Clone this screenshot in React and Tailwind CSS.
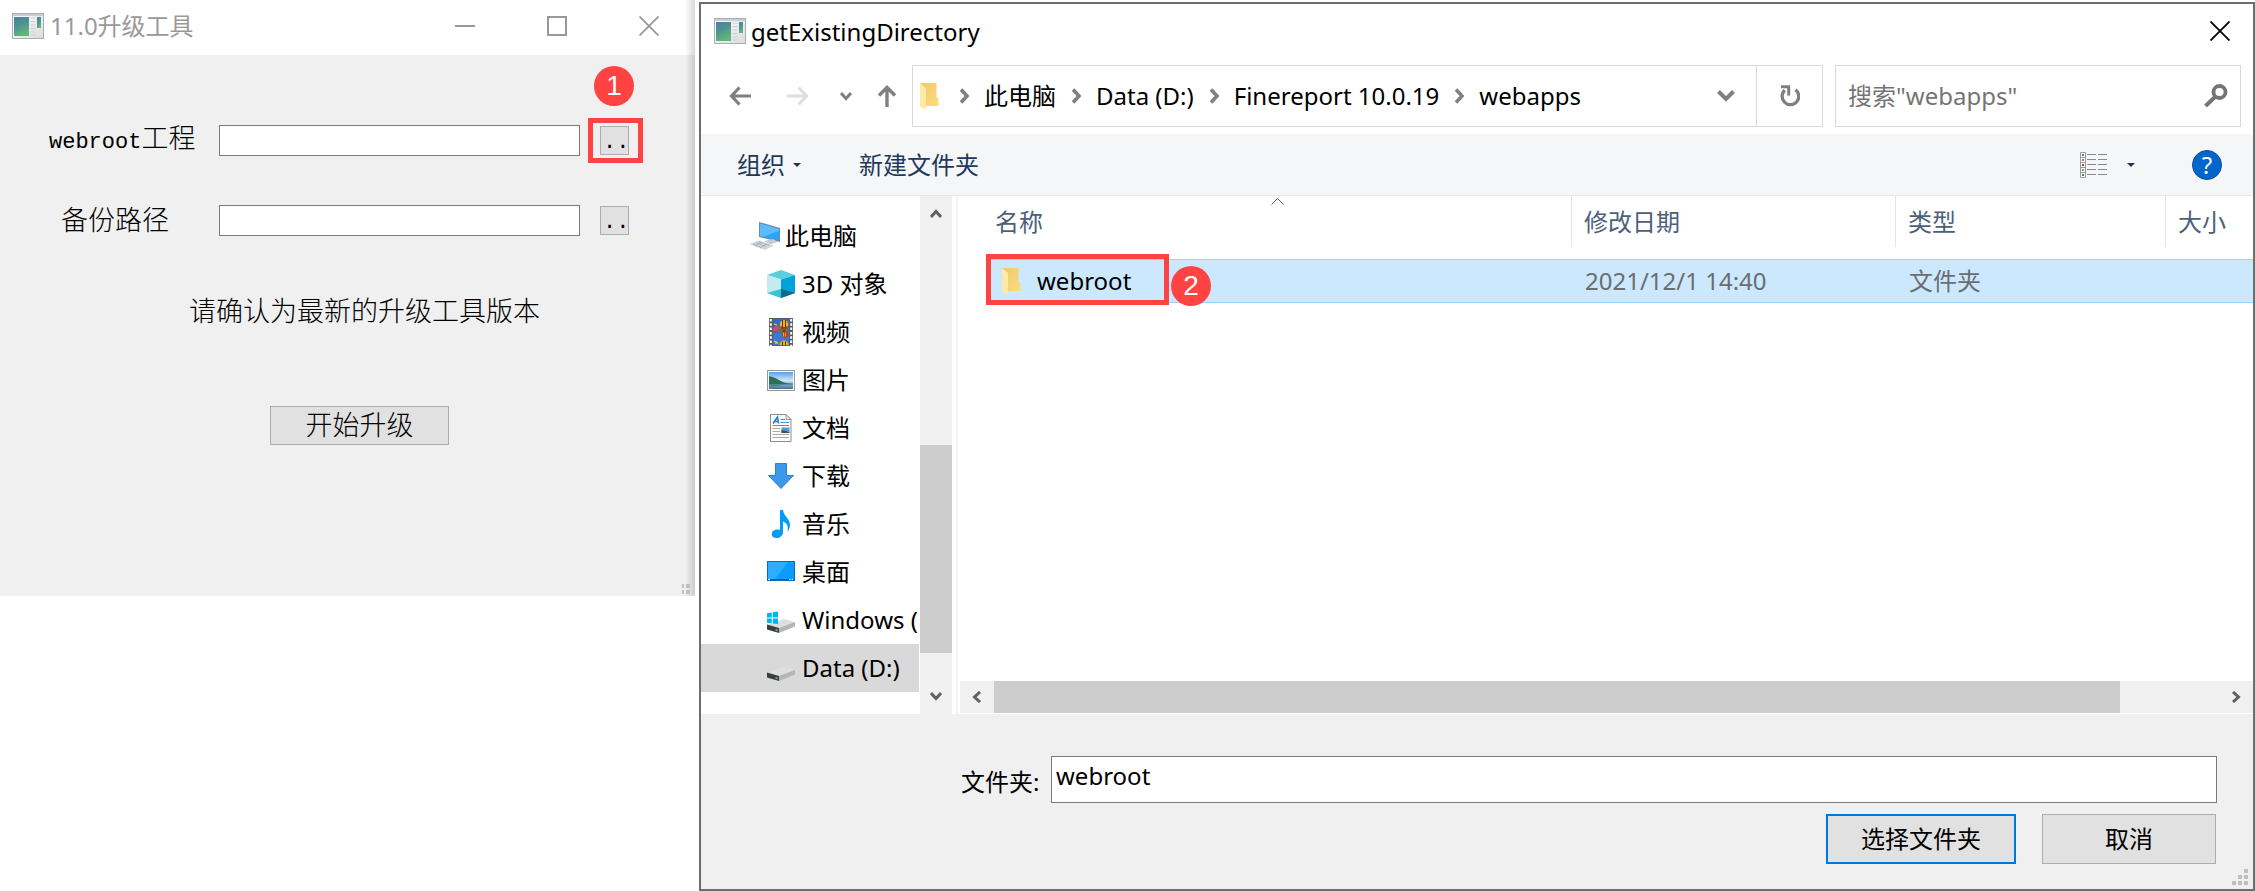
import React from "react";

const uiFont = "font-['Noto_Sans','Noto_Sans_CJK_SC',sans-serif]";
const formFont = "font-['Liberation_Serif','Noto_Sans_CJK_SC',serif]";

function AppIcon({ className }) {
  return (
    <svg className={className} viewBox="0 0 32 26" preserveAspectRatio="none" aria-hidden="true">
      <defs>
        <linearGradient id="appPane" x1="0" y1="0" x2="0.4" y2="1">
          <stop offset="0" stopColor="#4a7fa8" />
          <stop offset="0.5" stopColor="#4d9490" />
          <stop offset="1" stopColor="#62b678" />
        </linearGradient>
        <linearGradient id="appFrame" x1="0" y1="0" x2="1" y2="1">
          <stop offset="0" stopColor="#ffffff" />
          <stop offset="1" stopColor="#dcdcdc" />
        </linearGradient>
      </defs>
      <rect x="0.5" y="0.5" width="31" height="25" fill="url(#appFrame)" stroke="#a9adb5" />
      <rect x="1" y="1" width="30" height="2" fill="#c9cdd6" />
      <rect x="2" y="4" width="15" height="19" fill="url(#appPane)" />
      <path d="M18.500 5h5M18.500 8.500h5M18.500 12h5M18.500 15.500h5M18.500 19h5M18.500 22h5" stroke="#cfcfcf" />
      <rect x="25" y="4" width="4" height="11" fill="url(#appPane)" />
    </svg>
  );
}

function CloseGlyph({ className }) {
  return (
    <svg className={className} viewBox="0 0 20 20" fill="none" stroke="currentColor" strokeWidth="1.8" aria-hidden="true">
      <path d="M0.500 0.500L19.500 19.500M19.500 0.500L0.500 19.500" />
    </svg>
  );
}

function FolderIcon({ className }) {
  return (
    <svg className={className} viewBox="0 0 19 27" aria-hidden="true">
      <defs>
        <linearGradient id="folderBack" x1="0" y1="0" x2="1" y2="1">
          <stop offset="0" stopColor="#efc865" />
          <stop offset="1" stopColor="#fbdc82" />
        </linearGradient>
      </defs>
      <path d="M0 0H16.500V14L18.500 15.500V23H0Z" fill="url(#folderBack)" />
      <path d="M0 0L6 5V22.500L5 27L0 23.500Z" fill="#ffe9a6" />
    </svg>
  );
}

function Chevron({ className, d, box = "0 0 10 16", width = 3.6 }) {
  return (
    <svg className={className} viewBox={box} fill="none" stroke="currentColor" strokeWidth={width} aria-hidden="true">
      <path d={d} />
    </svg>
  );
}

function ComputerIcon() {
  return (
    <svg className="h-7 w-8 shrink-0" viewBox="0 0 32 28" aria-hidden="true">
      <path d="M10 0L31 6V20L10 15Z" fill="#6e8ba3" />
      <path d="M11 1.500L30 7V18.500L11 14Z" fill="#2aa5fb" />
      <path d="M11 1.500L30 7V9L14 14.700L11 14Z" fill="#5cbcff" />
      <path d="M15 19L24 17L29 20L21 22.500Z" fill="#c5ccd2" />
      <path d="M0 22L10 18.500L25 23.500L16 28Z" fill="#d5d9dc" />
      <path d="M4 22L12 25.500M7 20.500L17 24.500M10 19.500L20 23.500M6 24L12 20.500M11 26L18 22" stroke="#9fa6ab" strokeWidth="0.8" />
    </svg>
  );
}

function CubeIcon() {
  return (
    <svg className="size-7 shrink-0" viewBox="0 0 28 28" aria-hidden="true">
      <path d="M0 5L14 0L28 5L14 9.500Z" fill="#5ccfdc" />
      <path d="M0 5L14 9.500V28L0 23Z" fill="#c3ecf0" />
      <path d="M28 5L14 9.500V28L28 23Z" fill="#00a3d9" />
      <path d="M14 19L28 23L14 28Z" fill="#0a6d8a" />
      <path d="M0 23L14 19V28Z" fill="#35c5d6" />
    </svg>
  );
}

function Balloon({ x, y }) {
  return (
    <g transform={`translate(${x} ${y})`}>
      <ellipse cx="0" cy="0" rx="4.200" ry="4.500" fill="#f5b31a" />
      <path d="M-4 1.500Q0 3.500 4 1.500L1.500 6H-1.500Z" fill="#c03a1c" />
      <path d="M-1.500 -4.500V4M1.500 -4.500V4" stroke="#4a2a10" strokeWidth="0.9" />
      <rect x="-1" y="6" width="2" height="1.500" fill="#3a2410" />
    </g>
  );
}

function VideoIcon() {
  return (
    <svg className="size-7 shrink-0" viewBox="0 0 28 28" aria-hidden="true">
      <rect x="2" y="0" width="24" height="28" fill="#5c5c5c" />
      <path d="M3.800 1V28M24.200 1V28" stroke="#fff" strokeWidth="2" strokeDasharray="2.500 1.800" />
      <rect x="6" y="1" width="16" height="12.500" fill="#3469c9" />
      <rect x="6" y="14.500" width="16" height="13" fill="#3b78d8" />
      <path d="M6 10l4-3 4 4 8 1v1.500H6z" fill="#d0486a" />
      <path d="M10 12l6-2 6 1v2.500H10z" fill="#3f8f32" />
      <Balloon x={17} y={6.500} />
      <ellipse cx="18" cy="16.500" rx="3" ry="3.200" fill="#c03a1c" />
      <path d="M16.500 14.500v4M18.500 14.500v4" stroke="#f5b31a" strokeWidth="0.9" />
      <path d="M12.500 27a4.500 4.500 0 0 1 9 0z" fill="#f5b31a" />
      <path d="M15.500 23.500V27M18.500 23.500V27" stroke="#4a2a10" />
      <path d="M7 6l3 1M7 23l3 1M8 25h3" stroke="#f2c737" strokeWidth="1.300" />
    </svg>
  );
}

function PictureIcon() {
  return (
    <svg className="size-7 shrink-0" viewBox="0 0 28 28" aria-hidden="true">
      <defs>
        <linearGradient id="sky" x1="0" y1="0" x2="0" y2="1">
          <stop offset="0" stopColor="#5aa0ea" />
          <stop offset="0.5" stopColor="#cfe5f6" />
          <stop offset="0.7" stopColor="#8fb4d0" />
          <stop offset="1" stopColor="#3e6f9c" />
        </linearGradient>
      </defs>
      <rect x="0.500" y="4.500" width="27" height="20" fill="#fff" stroke="#989898" />
      <rect x="2" y="6" width="24" height="17" fill="url(#sky)" />
      <path d="M2 10Q8 11 13 14.500T26 17.500V18.500H2Z" fill="#2f6f55" />
      <path d="M2 18.500H18L8 20.500H2Z" fill="#4d8677" />
    </svg>
  );
}

function DocumentIcon() {
  return (
    <svg className="size-7 shrink-0" viewBox="0 0 28 28" aria-hidden="true">
      <path d="M3.500 0.500H19L24 5.500V27.500H3.500Z" fill="#fbfbfb" stroke="#8d8d8d" />
      <path d="M19 0.500V5.500H24Z" fill="#e3e3e3" stroke="#8d8d8d" strokeWidth="0.8" />
      <path d="M6 9.500L10.500 3L11.500 9.500M7.800 7.500H11" stroke="#1f7fc4" strokeWidth="1.500" fill="none" />
      <path d="M13.500 5.500H18M13.500 8.500H22M5.500 11.500H22" stroke="#3b97d8" strokeWidth="1.200" />
      <path d="M5.500 14.500H13M5.500 17.500H13M5.500 20.500H22M5.500 23.500H22" stroke="#a8a8a8" />
      <rect x="14.500" y="13.500" width="8" height="5.500" fill="#5d96c4" />
      <path d="M14.500 16l3 .5 5 2v.5h-8z" fill="#2d5f50" />
    </svg>
  );
}

function DownloadIcon() {
  return (
    <svg className="size-7 shrink-0" viewBox="0 0 28 28" aria-hidden="true">
      <path d="M8.500 1.500H19.500V13.500H26.500L14 26.500L1.500 13.500H8.500Z" fill="#3b98ea" stroke="#2c7fca" />
    </svg>
  );
}

function MusicIcon() {
  return (
    <svg className="size-7 shrink-0" viewBox="0 0 28 28" aria-hidden="true">
      <path d="M13 0H16C16.500 6 23 8.500 23 15C23 18 22 20 20.500 21.500C21.500 16 20 13 16 11.500V22C16 26 12.500 28 9.500 28C6.500 28 4.800 26.500 4.800 24.200C4.800 20.500 9 18.800 13 20Z" fill="#009cf5" />
    </svg>
  );
}

function DesktopIcon() {
  return (
    <svg className="size-7 shrink-0" viewBox="0 0 28 28" aria-hidden="true">
      <rect x="0.500" y="3.500" width="27" height="19" fill="#0c9bfa" stroke="#0a6db4" />
      <path d="M1 4H21L8 21H1Z" fill="#2cadff" />
      <path d="M1 21.500H27" stroke="#07609f" />
      <path d="M1 21.500H3M22 21.500H23.500M24.500 21.500H26" stroke="#fff" />
    </svg>
  );
}

function DriveIcon({ system }) {
  return (
    <svg className="size-7 shrink-0" viewBox="0 0 28 28" aria-hidden="true">
      <path d="M0 19L17 13L28 16L12 22.500Z" fill="#dcdee0" />
      <path d="M12 22L28 16V20.500L12 27Z" fill="#b3b5b8" />
      <path d="M0 18.500L12 22V27L0 23.500Z" fill="#3b3e40" />
      <path d="M8.500 23.800l2.200 .7" stroke="#3fe043" strokeWidth="1.600" />
      {system && (
        <path
          d="M0 7.200L4.800 6.500V11.500H0ZM5.800 6.300L11 5.600V11.500H5.800ZM0 12.500H4.800V17.300L0 16.700ZM5.800 12.500H11V18L5.800 17.400Z"
          fill="#00b4f0"
        />
      )}
    </svg>
  );
}

function Badge({ children, className }) {
  return (
    <span
      className={`absolute z-10 flex size-10 items-center justify-center rounded-full bg-[#ff4242] font-['Liberation_Sans',sans-serif] text-[28px] leading-10 text-white ${className}`}
    >
      {children}
    </span>
  );
}

function PathRow({ id, latin, label, labelClass = "", marked }) {
  return (
    <div className="flex h-[31px] items-center">
      <label htmlFor={id} className={`w-[170px] shrink-0 whitespace-nowrap text-[27px] font-light leading-8 ${labelClass}`}>
        {latin && <span className="font-['Liberation_Mono',monospace] text-[22px] font-normal">{latin}</span>}
        {label}
      </label>
      <input id={id} type="text" className="h-full min-w-0 flex-1 border border-[#7a7a7a] bg-white px-1 text-xl outline-none" />
      <div className="relative ml-5">
        <button
          type="button"
          aria-label={`${label} 浏览`}
          className="flex h-[29px] w-[29px] items-center border border-[#adadad] bg-[#e1e1e1] pl-0.5 pt-1 font-['Liberation_Mono',monospace] text-[22px] leading-6"
        >
          ..
        </button>
        {marked && (
          <>
            <span className="pointer-events-none absolute -inset-y-2 -left-3 -right-3.5 border-[5px] border-[#ff4242]" />
            <Badge className="-left-1.5 -top-15">1</Badge>
          </>
        )}
      </div>
    </div>
  );
}

function UpgradeWindow() {
  return (
    <section className={`relative flex h-[596px] w-[695px] shrink-0 flex-col bg-[#f0f0f0] text-black ${formFont}`}>
      <header className={`flex h-[55px] items-center bg-white pb-1 pl-3 pr-9 text-[#999] ${uiFont}`}>
        <AppIcon className="h-[26px] w-8" />
        <h1 className="ml-1.5 flex-1 text-2xl leading-8">11.0升级工具</h1>
        <div className="flex items-center gap-[72px]">
          <button type="button" aria-label="最小化" className="flex size-5 items-center">
            <span className="h-0.5 w-5 bg-[#999]" />
          </button>
          <button type="button" aria-label="最大化" className="size-5 border-2 border-[#999]" />
          <button type="button" aria-label="关闭" className="size-5">
            <CloseGlyph className="size-5" />
          </button>
        </div>
      </header>
      <form className="flex flex-col pl-[49px] pr-[66px] pt-[70px]" onSubmit={(e) => e.preventDefault()}>
        <PathRow id="webroot" latin="webroot" label="工程" marked />
        <div className="mt-[49px]">
          <PathRow id="backup" label="备份路径" labelClass="pl-3" />
        </div>
        <p className="mt-[60px] pl-[140px] text-[27px] font-light leading-8">请确认为最新的升级工具版本</p>
        <button
          type="submit"
          className="ml-[221px] mt-[78px] h-[39px] w-[179px] border border-[#adadad] bg-[#e1e1e1] text-[27px] font-light leading-8"
        >
          开始升级
        </button>
      </form>
      <div className="pointer-events-none absolute inset-y-0 right-0 w-2.5 bg-linear-to-r from-transparent to-black/15" />
      <svg className="absolute bottom-0.5 right-1 size-[10px]" viewBox="0 0 10 10" fill="#bfbfbf" aria-hidden="true">
        <path d="M1 0h2v4H1zM5 0h4v4H5zM1 6h2v4H1zM5 6h4v4H5z" />
      </svg>
    </section>
  );
}

const crumbs = ["此电脑", "Data (D:)", "Finereport 10.0.19", "webapps"];

function AddressRow() {
  return (
    <div className="flex h-[62px] items-stretch pl-7 pr-3">
      <div className="flex w-[183px] shrink-0 items-center text-[#808080]">
        <button type="button" aria-label="后退" className="w-[22px]">
          <svg className="h-5 w-[22px]" viewBox="0 0 22 20" fill="none" stroke="currentColor" strokeWidth="3.200" aria-hidden="true">
            <path d="M22 10H2.500M10.500 1.500L2.500 10L10.500 18.500" />
          </svg>
        </button>
        <button type="button" aria-label="前进" className="ml-9 w-[22px] text-[#dedede]">
          <svg className="h-5 w-[22px]" viewBox="0 0 22 20" fill="none" stroke="currentColor" strokeWidth="3.200" aria-hidden="true">
            <path d="M0 10H19.500M11.500 1.500L19.500 10L11.500 18.500" />
          </svg>
        </button>
        <button type="button" aria-label="最近位置" className="ml-[31px] w-3">
          <Chevron className="h-2.5 w-3" box="0 0 12 10" d="M1 2L6 7.500L11 2" width={3} />
        </button>
        <button type="button" aria-label="上移" className="ml-[26px] w-[18px]">
          <svg className="h-[22px] w-[18px]" viewBox="0 0 18 22" fill="none" stroke="currentColor" strokeWidth="3.400" aria-hidden="true">
            <path d="M9 22V2.500M1 10.500L9 2.500L17 10.500" />
          </svg>
        </button>
      </div>
      <div className="flex min-w-0 flex-[909] border border-[#d9d9d9]">
        <div className="flex flex-1 items-center pl-[7px]">
          <FolderIcon className="h-[27px] w-[19px] shrink-0" />
          <ol className="ml-[5px] flex items-center">
            {crumbs.map((c) => (
              <li key={c} className="flex items-center whitespace-nowrap text-2xl leading-8">
                <Chevron className="mx-[15px] h-4 w-2.5 text-[#808080]" d="M2 1.500L8 8L2 14.500" />
                <a href="#path">{c}</a>
              </li>
            ))}
          </ol>
          <button type="button" aria-label="历史记录" className="ml-auto mr-[21px] text-[#808080]">
            <Chevron className="h-3 w-[18px]" box="0 0 18 12" d="M1.500 1.500L9 9L16.500 1.500" width={4} />
          </button>
        </div>
        <button type="button" aria-label="刷新" className="flex w-[66px] items-center justify-center border-l border-[#d9d9d9] text-[#808080]">
          <svg className="h-[22px] w-5" viewBox="0 0 20 22" fill="none" stroke="currentColor" aria-hidden="true">
            <path d="M15.500 4.800A8.300 8.300 0 1 1 4.800 5.300" strokeWidth="3.300" />
            <path d="M1 1.800H8.700V10.500" strokeWidth="3" />
          </svg>
        </button>
      </div>
      <div className="ml-3 flex min-w-0 flex-[380] items-center border border-[#d9d9d9] pl-3 pr-3">
        <input
          type="search"
          aria-label="搜索"
          placeholder={'搜索"webapps"'}
          className="min-w-0 flex-1 text-2xl leading-8 outline-none placeholder:text-[#757575]"
        />
        <svg className="h-6 w-6 shrink-0 text-[#757575]" viewBox="0 0 24 24" fill="none" stroke="currentColor" aria-hidden="true">
          <circle cx="15.500" cy="8" r="6" strokeWidth="3.800" />
          <path d="M11.500 12.500L1.500 22" strokeWidth="4" />
        </svg>
      </div>
    </div>
  );
}

function Triangle({ className }) {
  return (
    <svg className={`h-1 w-2 ${className}`} viewBox="0 0 8 4" fill="#1e395b" aria-hidden="true">
      <path d="M0 0H8L4 4Z" />
    </svg>
  );
}

function Toolbar() {
  return (
    <div className="mt-[7px] flex h-[62px] items-center border-b border-[#e5e8eb] bg-[#f4f6f8] pl-9 pr-[31px] text-2xl leading-8 text-[#1e395b]">
      <button type="button" className="flex items-center">
        组织
        <Triangle className="ml-2" />
      </button>
      <button type="button" className="ml-[58px]">新建文件夹</button>
      <button type="button" aria-label="更改视图" className="ml-auto flex items-center">
        <svg className="h-[26px] w-[27px]" viewBox="0 0 27 26" aria-hidden="true">
          <path d="M0.500 0.500H5.500V25.500H0.500ZM0.500 5.500H5.500M0.500 10.500H5.500M0.500 15.500H5.500M0.500 20.500H5.500" fill="#fff" stroke="#9b9b9b" />
          <path d="M7 2.500H16M18 2.500H27M7 7.500H16M18 7.500H27M7 12.500H16M18 12.500H27M7 17.500H16M18 17.500H27M7 22.500H16M18 22.500H27" stroke="#8a8a8a" />
          <path d="M2 2h2v2H2zM2 22h2v2H2z" fill="#3a7f9c" />
          <path d="M2 7h2v2H2z" fill="#8a8a52" />
          <path d="M2 12h2v2H2z" fill="#c03524" />
          <path d="M2 17h2v2H2z" fill="#7fa862" />
        </svg>
        <Triangle className="ml-5" />
      </button>
      <button
        type="button"
        className="ml-[57px] flex size-[30px] items-center justify-center rounded-full border border-[#0a4f92] bg-[#0066cc] text-2xl leading-7 text-white"
      >
        ?
      </button>
    </div>
  );
}

const places = [
  { name: "3D 对象", icon: <CubeIcon /> },
  { name: "视频", icon: <VideoIcon /> },
  { name: "图片", icon: <PictureIcon /> },
  { name: "文档", icon: <DocumentIcon /> },
  { name: "下载", icon: <DownloadIcon /> },
  { name: "音乐", icon: <MusicIcon /> },
  { name: "桌面", icon: <DesktopIcon /> },
  { name: "Windows (", icon: <DriveIcon system /> },
  { name: "Data (D:)", icon: <DriveIcon />, selected: true },
];

function Sidebar() {
  return (
    <nav className="w-[218px] shrink-0 overflow-hidden pb-[22px] pt-4 text-2xl leading-8">
      <a href="#computer" className="flex h-12 items-center gap-1 whitespace-nowrap pl-12">
        <ComputerIcon />
        此电脑
      </a>
      <ul>
        {places.map((p) => (
          <li key={p.name}>
            <a
              href="#place"
              className={`flex h-12 items-center gap-[7px] whitespace-nowrap pl-[66px] ${p.selected ? "bg-[#d9d9d9]" : ""}`}
            >
              {p.icon}
              {p.name}
            </a>
          </li>
        ))}
      </ul>
    </nav>
  );
}

function FileTable() {
  const head = "p-0 pb-3 text-left font-normal";
  const cell = "flex h-[51px] items-center border-[#e5e5e5] pl-3";
  const body = "border-y border-[#99d1ff] py-0 pl-[13px]";
  return (
    <table className="w-full table-fixed border-separate border-spacing-0 text-2xl leading-8">
      <colgroup>
        <col className="w-[585px]" />
        <col className="w-[324px]" />
        <col className="w-[270px]" />
        <col />
      </colgroup>
      <thead className="text-[#4c607a]">
        <tr>
          <th className={head}>
            <div className="relative flex h-[51px] items-center border-r border-[#e5e5e5] pl-2">
              名称
              <svg className="absolute left-71 top-0.5 h-[7px] w-[13px]" viewBox="0 0 13 7" fill="none" stroke="#555" aria-hidden="true">
                <path d="M0.500 6.500L6.500 0.500L12.500 6.500" />
              </svg>
            </div>
          </th>
          <th className={head}>
            <div className={`${cell} border-r`}>修改日期</div>
          </th>
          <th className={head}>
            <div className={`${cell} border-r`}>类型</div>
          </th>
          <th className={head}>
            <div className={`${cell} whitespace-nowrap`}>大小</div>
          </th>
        </tr>
      </thead>
      <tbody className="text-[#6d6d6d]">
        <tr className="h-11 bg-[#cce8ff]">
          <td className="relative border-y border-[#99d1ff] p-0 text-black">
            <div className="flex items-center gap-4 pl-[15px]">
              <FolderIcon className="h-[27px] w-[19px]" />
              webroot
            </div>
            <span className="pointer-events-none absolute -left-px -top-1.5 h-[51px] w-[183px] border-[5px] border-[#ff4242]" />
            <Badge className="left-46 top-1.5">2</Badge>
          </td>
          <td className={body}>2021/12/1 14:40</td>
          <td className={body}>文件夹</td>
          <td className={body} />
        </tr>
      </tbody>
    </table>
  );
}

function DirectoryDialog() {
  return (
    <section className={`mt-0.5 flex min-w-0 flex-1 flex-col border-2 border-[#6d6d70] bg-white text-black ${uiFont}`}>
      <header className="flex h-[61px] items-start pl-[13px] pr-[23px] pt-3">
        <AppIcon className="mt-0.5 h-[26px] w-8" />
        <h2 className="ml-[5px] flex-1 text-2xl leading-8">getExistingDirectory</h2>
        <button type="button" aria-label="关闭" className="mt-[5px] size-5">
          <CloseGlyph className="size-5" />
        </button>
      </header>
      <AddressRow />
      <Toolbar />
      <div className="flex">
        <Sidebar />
        <div className="ml-px flex w-8 shrink-0 flex-col items-center bg-[#f0f0f0] text-[#606060]">
          <Chevron className="my-[13px] h-2.5 w-3" box="0 0 12 10" d="M1 8L6 2.500L11 8" width={3} />
          <div className="flex-[213]" />
          <div className="w-full flex-[208] bg-[#cdcdcd]" />
          <div className="flex-[25]" />
          <Chevron className="my-[13px] h-2.5 w-3" box="0 0 12 10" d="M1 2L6 7.500L11 2" width={3} />
        </div>
        <div className="ml-1 flex min-w-0 flex-1 flex-col border-l-2 border-[#f5f5f5]">
          <div className="flex-1 pl-[29px]">
            <FileTable />
          </div>
          <div className="mb-px ml-0.5 flex h-8 items-center bg-[#f0f0f0] text-[#606060]">
            <Chevron className="mx-3 h-3 w-2.5" box="0 0 10 12" d="M8 1L2.500 6L8 11" width={3} />
            <div className="h-full flex-[1125] bg-[#cdcdcd]" />
            <div className="flex-[99]" />
            <Chevron className="mx-3 h-3 w-2.5" box="0 0 10 12" d="M2 1L7.500 6L2 11" width={3} />
          </div>
        </div>
      </div>
      <footer className="relative flex-1 bg-[#f0f0f0] pb-[25px] pl-[260px] pr-9 pt-[42px] text-2xl leading-8">
        <div className="flex items-center">
          <label htmlFor="folder" className="w-[90px] shrink-0 whitespace-nowrap pt-1">文件夹:</label>
          <input
            id="folder"
            type="text"
            defaultValue="webroot"
            className="h-[47px] min-w-0 flex-1 border border-[#7a7a7a] bg-white pb-2 pl-1 outline-none"
          />
        </div>
        <div className="mt-[11px] flex justify-end gap-[26px] pr-px">
          <button type="button" className="h-[50px] w-[190px] border-2 border-[#0078d7] bg-[#e1e1e1]">选择文件夹</button>
          <button type="button" className="h-[50px] w-[174px] border border-[#adadad] bg-[#e1e1e1]">取消</button>
        </div>
        <svg className="absolute bottom-1 right-[5px] size-4" viewBox="0 0 16 16" fill="#bfbfbf" aria-hidden="true">
          <path d="M12 0h4v4h-4zM6 6h4v4H6zM12 6h4v4h-4zM0 12h4v4H0zM6 12h4v4H6zM12 12h4v4h-4z" />
        </svg>
      </footer>
    </section>
  );
}

export default function App() {
  return (
    <main className="flex items-stretch gap-1 bg-white">
      <UpgradeWindow />
      <DirectoryDialog />
    </main>
  );
}
